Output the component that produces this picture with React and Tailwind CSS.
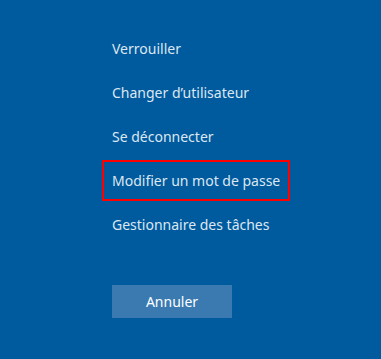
export default function App() {
  const items = [
    'Verrouiller',
    'Changer d\u2019utilisateur',
    'Se déconnecter',
    'Modifier un mot de passe',
    'Gestionnaire des tâches',
  ];

  return (
    <div
      className="w-[381px] h-[359px] bg-[#005a9e] pt-[28px] pl-[102px]"
      style={{ fontFamily: '"Noto Sans", "Open Sans", sans-serif' }}
    >
      <div className="flex flex-col gap-[3px]">
        {items.map((label, i) => (
          <div
            key={label}
            className={
              'h-[41px] flex items-center px-[8px] border-2 text-[14px] text-[#dce7f1] whitespace-nowrap ' +
              (i === 3 ? 'w-[188px] border-[#ff0000]' : 'w-fit border-transparent')
            }
          >
            {label}
          </div>
        ))}
      </div>

      <button className="mt-[40px] ml-[10px] w-[120px] h-[33px] bg-[#3a7ab0] text-white text-[14px] flex items-center justify-center">
        Annuler
      </button>
    </div>
  );
}
